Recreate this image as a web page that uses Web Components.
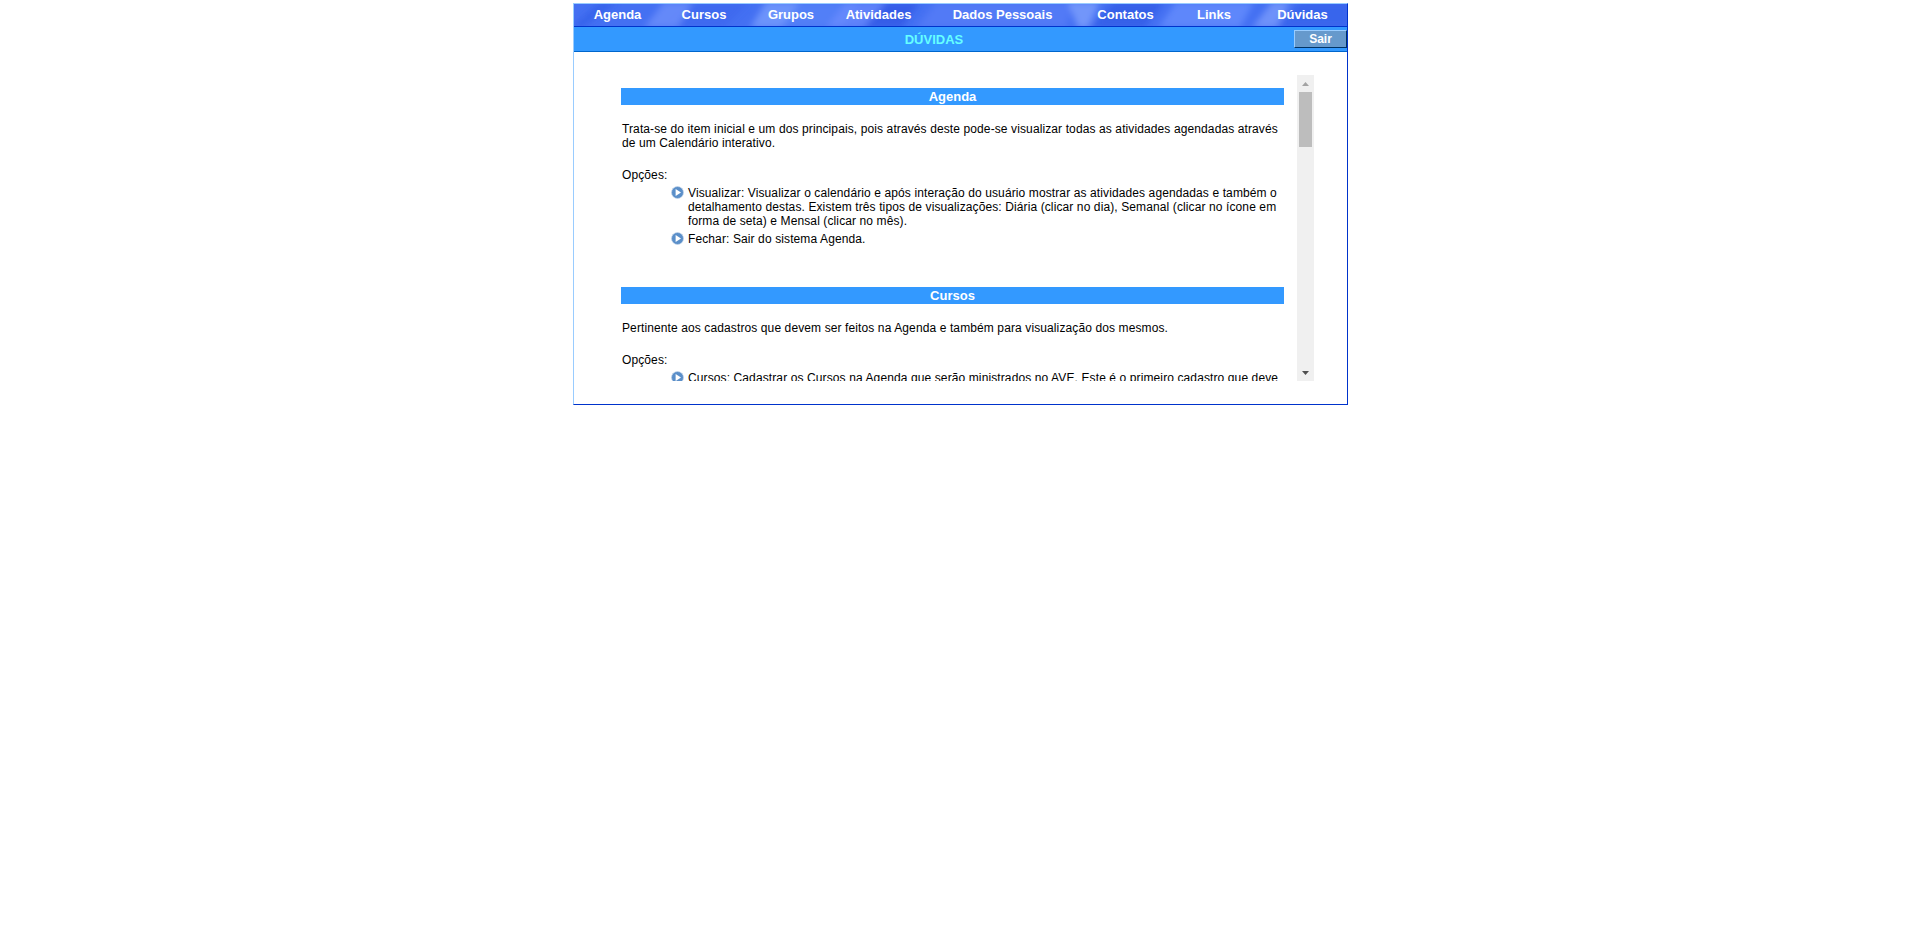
<!DOCTYPE html>
<html lang="pt-BR">
<head>
<meta charset="utf-8">
<title>Dúvidas</title>
<style>
  html, body { margin: 0; background: #fff; }
  body { font-family: 'Liberation Sans', Arial, sans-serif; font-size: 12px; color: #000; padding-top: 3px; }
</style>
</head>
<body>
<help-frame>
  <top-menu slot="menu">
    <menu-item style="width:87px">Agenda</menu-item>
    <menu-item style="width:86px">Cursos</menu-item>
    <menu-item style="width:88px">Grupos</menu-item>
    <menu-item style="width:87px">Atividades</menu-item>
    <menu-item style="width:161px">Dados Pessoais</menu-item>
    <menu-item style="width:85px">Contatos</menu-item>
    <menu-item style="width:92px">Links</menu-item>
    <menu-item style="width:85px">Dúvidas</menu-item>
  </top-menu>
  <title-bar slot="title" label="Sair">DÚVIDAS</title-bar>
  <help-section heading="Agenda">
    <span slot="intro">Trata-se do item inicial e um dos principais, pois através deste pode-se visualizar todas as atividades agendadas através de um Calendário interativo.</span>
    <help-option>Visualizar: Visualizar o calendário e após interação do usuário mostrar as atividades agendadas e também o detalhamento destas. Existem três tipos de visualizações: Diária (clicar no dia), Semanal (clicar no ícone em forma de seta) e Mensal (clicar no mês).</help-option>
    <help-option>Fechar: Sair do sistema Agenda.</help-option>
  </help-section>
  <help-section heading="Cursos">
    <span slot="intro">Pertinente aos cadastros que devem ser feitos na Agenda e também para visualização dos mesmos.</span>
    <help-option>Cursos: Cadastrar os Cursos na Agenda que serão ministrados no AVE. Este é o primeiro cadastro que deve</help-option>
  </help-section>
</help-frame>

<script>
class HelpFrame extends HTMLElement {
  constructor() {
    super();
    this.attachShadow({ mode: 'open' });
    this.shadowRoot.innerHTML = `
<style>
  :host {
    display: block;
    box-sizing: border-box;
    width: 775px;
    height: 402px;
    margin-left: 573px;
    border: 1px solid #0033cc;
    border-left-color: #99ccff;
    border-top-color: #99ccff;
  }
  .main {
    display: flex;
    height: 306px;
    padding: 23px 0 0 47px;
    overflow: hidden;
  }
  .view {
    width: 663px;
    height: 306px;
    overflow: hidden;
    flex: none;
  }
  help-scrollbar { margin-left: 13px; }
</style>
<slot name="menu"></slot>
<slot name="title"></slot>
<div class="main">
  <div class="view"><slot></slot></div>
  <help-scrollbar></help-scrollbar>
</div>`;
  }
}

class TopMenu extends HTMLElement {
  constructor() {
    super();
    this.attachShadow({ mode: 'open' });
    this.shadowRoot.innerHTML = `
<style>
  :host {
    display: flex;
    position: relative;
    height: 22px;
    border-bottom: 1px solid #0033cc;
    background: #4470f2;
    overflow: hidden;
  }
  svg { position: absolute; left: 0; top: 0; }
</style>
<svg width="773" height="22" viewBox="0 0 773 22">
  <defs><filter id="soft" x="-10%" y="-100%" width="120%" height="300%"><feGaussianBlur stdDeviation="3"/></filter></defs>
  <g filter="url(#soft)">
    <!-- dark folds -->
    <path d="M-4 24 26 -2 44 -2 8 24Z" fill="#2f5be6" opacity=".6"/>
    <path d="M96 24 124 -2 176 -2 150 24Z" fill="#3a66ee" opacity=".7"/>
    <path d="M286 24 312 -2 346 -2 328 24Z" fill="#2c55e2" opacity=".7"/>
    <path d="M516 24 540 -2 590 -2 570 24Z" fill="#2f58e4" opacity=".7"/>
    <path d="M703 24 726 -2 776 -2 776 24Z" fill="#3560ea" opacity=".7"/>
    <!-- light folds -->
    <path d="M70 24 90 -2 118 -2 104 24Z" fill="#7d9cff" opacity=".55"/>
    <path d="M176 24 192 -2 226 -2 208 24Z" fill="#7ea2ff" opacity=".7"/>
    <path d="M206 24 226 -2 286 -2 268 24Z" fill="#5c88fa" opacity=".6"/>
    <path d="M252 24 272 -2 312 -2 290 24Z" fill="#6f90ff" opacity=".6"/>
    <path d="M342 24 362 -2 500 -2 492 24Z" fill="#5c80f8" opacity=".6"/>
    <path d="M494 -2 526 -2 514 24 504 24Z" fill="#8caaff" opacity=".65"/>
    <path d="M584 24 602 -2 680 -2 666 24Z" fill="#6a90ff" opacity=".7"/>
    <path d="M678 24 698 -2 716 -2 702 24Z" fill="#8aa8ff" opacity=".6"/>
  </g>
</svg>
<slot></slot>`;
  }
}

class MenuItem extends HTMLElement {
  constructor() {
    super();
    this.attachShadow({ mode: 'open' });
    this.shadowRoot.innerHTML = `
<style>
  :host {
    display: block;
    position: relative;
    text-align: center;
    color: #fff;
    font: bold 13px/21px 'Liberation Sans', Arial, sans-serif;
    cursor: pointer;
  }
</style>
<slot></slot>`;
  }
}

class TitleBar extends HTMLElement {
  constructor() {
    super();
    this.attachShadow({ mode: 'open' });
    this.shadowRoot.innerHTML = `
<style>
  :host {
    display: flex;
    align-items: center;
    box-sizing: border-box;
    height: 25px;
    background: #3399ff;
    border-bottom: 1px solid #0066cc;
  }
  .name {
    flex: 1;
    text-align: center;
    color: #66ffff;
    font: bold 13px/25px 'Liberation Sans', Arial, sans-serif;
  }
  button {
    box-sizing: border-box;
    width: 53px;
    height: 18px;
    margin: 0;
    padding: 0;
    border: 1px solid;
    border-color: #99ccff #003366 #003366 #99ccff;
    background: #6699cc;
    color: #fff;
    font: bold 12px/14px 'Liberation Sans', Arial, sans-serif;
    cursor: pointer;
  }
</style>
<div class="name"><slot></slot></div>
<button></button>`;
    this.shadowRoot.querySelector('button').textContent = this.getAttribute('label');
  }
}

class HelpSection extends HTMLElement {
  constructor() {
    super();
    this.attachShadow({ mode: 'open' });
    this.shadowRoot.innerHTML = `
<style>
  :host {
    display: block;
    margin: 13px 0 41px;
    font: 12px/14px 'Liberation Sans', Arial, sans-serif;
    letter-spacing: .11px;
    color: #000;
  }
  h2 {
    margin: 0 0 17px;
    height: 17px;
    background: #3399ff;
    color: #fff;
    text-align: center;
    letter-spacing: 0;
    font: bold 13px/17px 'Liberation Sans', Arial, sans-serif;
  }
  .intro { padding-left: 1px; }
  .label { margin: 18px 0 4px; padding-left: 1px; }
</style>
<h2></h2>
<div class="intro"><slot name="intro"></slot></div>
<div class="label">Opções:</div>
<slot></slot>`;
    this.shadowRoot.querySelector('h2').textContent = this.getAttribute('heading');
  }
}

class HelpOption extends HTMLElement {
  constructor() {
    super();
    this.attachShadow({ mode: 'open' });
    this.shadowRoot.innerHTML = `
<style>
  :host {
    display: flex;
    align-items: flex-start;
    margin: 0 0 4px 49px;
    padding-right: 4px;
  }
  svg { flex: none; width: 13px; height: 13px; margin: 0 4px 0 1px; }
</style>
<svg viewBox="0 0 13 13">
  <circle cx="6.5" cy="6.5" r="6" fill="#5b8fc9" stroke="#c4d6ea" stroke-width=".7"/>
  <path d="M4.6 2.9 10 6.5 4.6 10.1Z" fill="#fff"/>
</svg>
<div><slot></slot></div>`;
  }
}

class HelpScrollbar extends HTMLElement {
  constructor() {
    super();
    this.attachShadow({ mode: 'open' });
    this.shadowRoot.innerHTML = `
<style>
  :host {
    display: flex;
    flex-direction: column;
    flex: none;
    width: 17px;
    height: 306px;
    background: #f0f0f0;
  }
  .btn { height: 17px; display: flex; align-items: center; justify-content: center; flex: none; }
  .track { flex: 1; padding: 0 2px; }
  .thumb { height: 55px; background: #bdbdbd; }
</style>
<div class="btn"><svg width="7" height="4" viewBox="0 0 7 4"><path d="M3.5 0 7 4H0Z" fill="#a3a3a3"/></svg></div>
<div class="track"><div class="thumb"></div></div>
<div class="btn"><svg width="7" height="4" viewBox="0 0 7 4"><path d="M0 0H7L3.5 4Z" fill="#505050"/></svg></div>`;
  }
}

customElements.define('help-frame', HelpFrame);
customElements.define('top-menu', TopMenu);
customElements.define('menu-item', MenuItem);
customElements.define('title-bar', TitleBar);
customElements.define('help-section', HelpSection);
customElements.define('help-option', HelpOption);
customElements.define('help-scrollbar', HelpScrollbar);
</script>
</body>
</html>
